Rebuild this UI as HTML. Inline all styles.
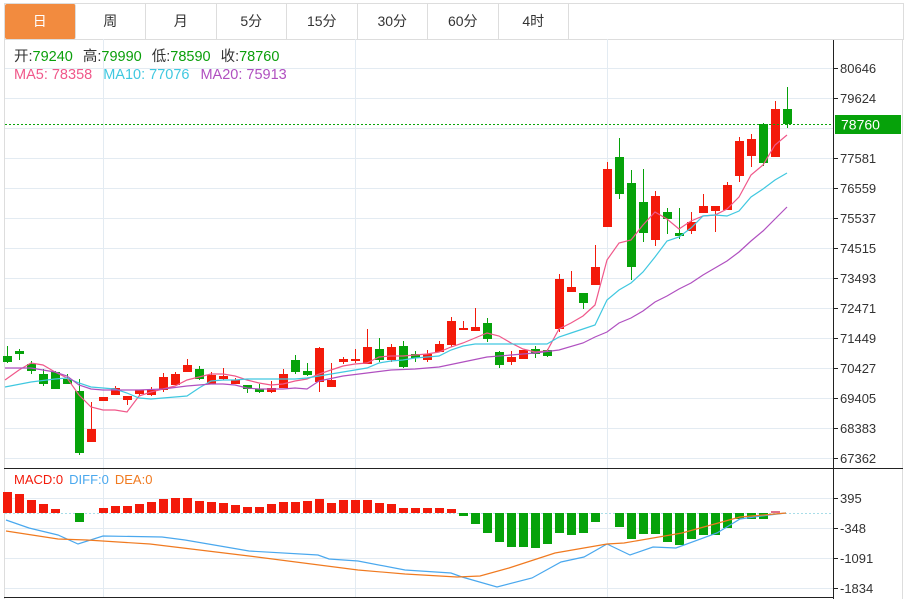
<!DOCTYPE html>
<html><head><meta charset="utf-8">
<style>
html,body{margin:0;padding:0;background:#fff;width:907px;height:599px;overflow:hidden}
body{font-family:"Liberation Sans","Noto Sans CJK SC",sans-serif;position:relative}
.tabs{position:absolute;left:4px;top:3px;width:898px;height:35px;border:1px solid #ddd;display:flex;box-sizing:content-box}
.tab{width:70.5px;height:35px;border-right:1px solid #ddd;box-sizing:border-box;text-align:center;line-height:35px;font-size:14px;color:#333}
.tab.on{background:#f28b3f;color:#fff;border-radius:2px}
svg{position:absolute;left:0;top:0}
</style></head><body>
<div class="tabs"><div class="tab on">日</div><div class="tab">周</div><div class="tab">月</div><div class="tab">5分</div><div class="tab">15分</div><div class="tab">30分</div><div class="tab">60分</div><div class="tab">4时</div></div>
<svg id="s" width="907" height="599" viewBox="0 0 907 599" font-family="Liberation Sans, Noto Sans CJK SC, sans-serif">
<g id="grid" stroke="#e3ebf2" stroke-width="1"></g>
<line x1="4.5" y1="39" x2="4.5" y2="599" stroke="#ddd"/>
<line x1="902.5" y1="39" x2="902.5" y2="599" stroke="#ddd"/>
<line x1="103.5" y1="39" x2="103.5" y2="597" stroke="#e3ebf2"/>
<line x1="355.5" y1="39" x2="355.5" y2="597" stroke="#e3ebf2"/>
<line x1="607.5" y1="39" x2="607.5" y2="597" stroke="#e3ebf2"/>
<g id="c"></g>
<g id="m"></g>
<line x1="833.5" y1="40" x2="833.5" y2="599" stroke="#222"/>
<line x1="4" y1="468.5" x2="903" y2="468.5" stroke="#222"/>
<line x1="4" y1="597.5" x2="833" y2="597.5" stroke="#222"/>
<line x1="5" y1="124.5" x2="833" y2="124.5" stroke="#0aa50a" stroke-dasharray="2,2"/>
<rect x="835" y="115" width="66" height="19" fill="#06a20a"/>
<text x="841" y="129.5" fill="#fff" font-size="14">78760</text>
<g id="ax" font-size="13" fill="#333"></g>
<text y="61" font-size="14.5"><tspan x="14" fill="#333">开:</tspan><tspan fill="#0a9f0a">79240</tspan><tspan fill="#333" dx="10">高:</tspan><tspan fill="#0a9f0a">79990</tspan><tspan fill="#333" dx="10">低:</tspan><tspan fill="#0a9f0a">78590</tspan><tspan fill="#333" dx="10">收:</tspan><tspan fill="#0a9f0a">78760</tspan></text>
<text y="79" font-size="14.5"><tspan x="14" fill="#f0588a">MA5: 78358</tspan><tspan fill="#40c8e0" dx="11">MA10: 77076</tspan><tspan fill="#b050c0" dx="11">MA20: 75913</tspan></text>
<text y="484" font-size="13"><tspan x="14" fill="#f31a0a">MACD:0</tspan><tspan fill="#4aa8ee" dx="6">DIFF:0</tspan><tspan fill="#f07a20" dx="6">DEA:0</tspan></text>
</svg>
<script>
var NS="http://www.w3.org/2000/svg";
function el(p,t,a){var e=document.createElementNS(NS,t);for(var k in a)e.setAttribute(k,a[k]);p.appendChild(e);return e;}
var g=document.getElementById('grid'),ax=document.getElementById('ax');
var labs=[["80646",68],["79624",98],[null,128],["77581",158],["76559",188],["75537",218],["74515",248],["73493",278],["72471",308],["71449",338],["70427",368],["69405",398],["68383",428],["67362",458],["395",498],["-348",528],["-1091",558],["-1834",588]];
labs.forEach(function(l){el(g,'line',{x1:5,x2:833,y1:l[1]+.5,y2:l[1]+.5});if(l[0]){el(ax,'line',{x1:833,x2:838,y1:l[1]+.5,y2:l[1]+.5,stroke:'#222'});var t=el(ax,'text',{x:840,y:l[1]+5});t.textContent=l[0];}});
var C=[[356,362,346,363,0],[351,354,349,360,0],[364,371,361,374,0],[374,384,369,386,0],[372,389,371,389,0],[379,384,374,384,0],[391,453,379,455,0],[429,442,402,442,1],[397,401,397,401,1],[388,395,386,395,1],[396,400,396,405,1],[390,394,390,396,1],[390,395,387,396,1],[377,390,373,392,1],[374,385,372,385,1],[365,372,359,372,1],[369,379,366,380,0],[375,384,372,384,1],[376,379,368,380,1],[380,384,378,384,1],[385,389,385,393,0],[389,392,384,393,0],[388,392,381,393,1],[374,388,369,388,1],[360,372,355,374,0],
[371,375,363,376,0],[348,382,347,392,1],[380,387,363,387,1],[359,362,357,364,1],[359,361,349,363,1],[347,364,329,364,1],[349,360,338,362,0],[347,360,344,362,1],[346,367,341,368,0],[354,358,351,362,0],[354,360,350,362,1],[344,352,341,352,1],[321,345,317,347,1],[328,330,321,330,1],[327,331,308,331,1],[323,339,318,342,0],[352,365,351,368,0],[357,362,351,365,1],[350,359,350,359,1],[349,354,346,358,0],[350,356,349,357,0],
[279,329,274,332,1],[287,292,271,292,1],[293,303,293,309,0],[267,285,245,285,1],[169,227,162,227,1],[157,194,138,199,0],[183,267,170,280,0],[202,233,169,242,0],[196,240,191,246,1],[212,219,208,234,0],[233,236,208,239,0],[222,231,212,234,1],[206,213,194,213,1],[206,211,206,232,1],[185,210,182,210,1],[141,176,137,182,1],[139,156,134,167,1],[124,163,123,166,0],[109,157,101,157,1],[109,124,87,128,0]];
var cg=document.getElementById('c');
C.forEach(function(c,i){var x=7+12*i;var col=c[4]?'#f31a0a':'#06a20a';
el(cg,'line',{x1:x+.5,x2:x+.5,y1:c[2],y2:c[3],stroke:col});
el(cg,'rect',{x:x-4,y:c[0],width:9,height:Math.max(2,c[1]-c[0]),fill:col});});
function pl(pts,col){el(cg,'polyline',{points:pts,fill:'none',stroke:col,'stroke-width':1.2});}
pl("5,380 19,370 31,363 43,365 55,372 67,378 79,395 91,407 103,410 115,410 127,412 139,396 151,392 163,389 175,386 187,380 199,377 211,374 223,374 235,376 247,380 259,383 271,385 283,384 295,381 307,379 319,374 331,370 343,366 355,364 367,363 379,357 391,356 403,356 415,355 427,354 439,352 451,347 463,343 475,338 487,333 499,336 511,343 523,349 535,352 547,351 559,329 571,323 583,316 595,305 607,260 619,243 631,240 643,225 655,212 667,219 679,229 691,221 703,216 715,215 727,209 739,197 751,175 763,165 775,145 787,135","#f0588a");
pl("5,387 31,382 55,379 67,378 79,383 91,387 103,388 115,389 127,393 139,398 151,399 163,398 175,397 187,396 199,388 211,381 223,380 235,380 247,379 283,379 295,379 307,378 319,376 331,374 343,372 355,370 367,368 379,363 391,361 403,360 415,358 427,357 439,356 451,350 463,346 475,344 547,344 559,337 571,333 583,329 595,325 607,300 619,290 631,283 643,272 655,257 667,241 679,237 691,228 703,216 715,215 727,216 739,211 751,197 763,189 775,180 787,173","#40c8e0");
pl("5,368 31,368 55,372 67,376 79,385 91,389 103,390 139,390 163,389 187,386 211,384 223,384 235,385 247,388 259,389 283,389 295,388 307,389 319,381 343,376 367,373 391,370 415,369 439,367 463,362 487,357 511,355 535,353 559,350 583,343 595,337 607,332 619,323 631,318 643,311 655,302 667,296 679,289 691,283 703,275 715,268 727,261 739,252 751,241 763,231 775,219 787,207","#b050c0");
var M=[492,494,500,504,509,513,522,513,508,506,506,504,502,499,498,498,501,502,503,505,507,507,504,502,502,501,499,503,500,500,500,503,504,508,508,508,508,509,516,524,533,542,547,547,548,544,533,535,533,522,513,527,539,534,534,542,545,539,535,535,528,519,519,519,511,513];
var mg=document.getElementById('m');
el(mg,'line',{x1:5,x2:833,y1:513.5,y2:513.5,stroke:'#a8dde8','stroke-dasharray':'2,2'});
M.forEach(function(v,i){var x=7+12*i-4;if(v<513)el(mg,'rect',{x:x,y:v,width:9,height:513-v,fill:i==64?'#e0708a':'#f31a0a'});else if(v>513)el(mg,'rect',{x:x,y:513,width:9,height:v-513,fill:'#06a20a'});});
el(mg,'polyline',{points:"6,520 29,528 58,535 78,544 103,536 162,537 185,540 220,546 249,551 318,555 329,559 358,561 405,570 451,573 462,577 497,587 532,578 561,562 584,557 607,544 630,555 653,547 676,548 717,533 740,519 769,515 786,513",fill:'none',stroke:'#4aa8ee','stroke-width':1.2});
el(mg,'polyline',{points:"6,531 58,539 87,540 150,544 249,556 358,570 405,574 457,577 480,576 509,568 555,553 607,544 624,543 682,533 740,517 786,513",fill:'none',stroke:'#f07a20','stroke-width':1.2});
</script>
</body></html>
